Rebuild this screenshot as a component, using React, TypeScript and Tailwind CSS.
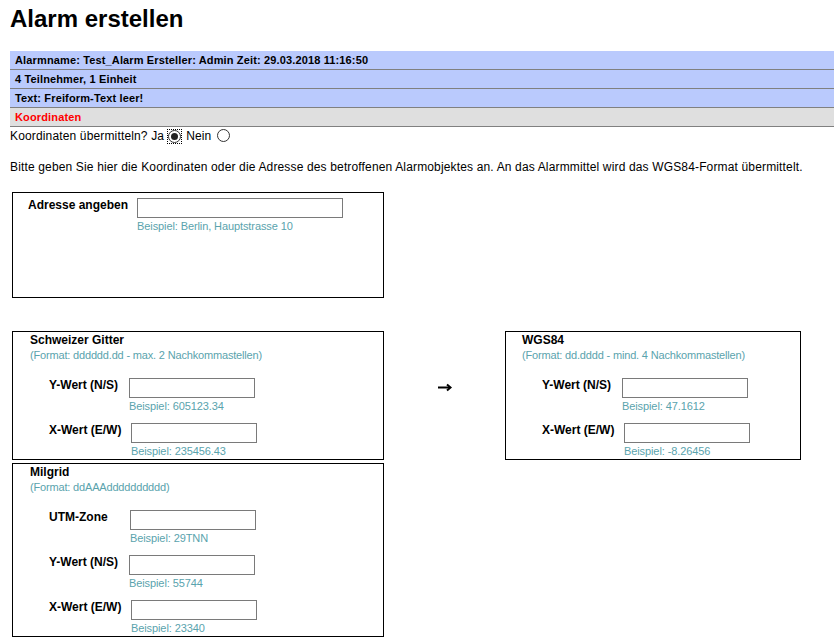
import React from "react";

const hint = "text-[11px] leading-[13px] tracking-[-0.1px] text-[#5aa3ad]";

interface FieldProps {
  label: string;
  example: string;
  labelWidth: string;
  first?: boolean;
}

function Field({ label, example, labelWidth, first }: FieldProps) {
  return (
    <div className={`flex items-start ${first ? "mt-[13px]" : "mt-[8px]"}`}>
      <div className={`${labelWidth} pt-[1px] text-[12px] leading-[16px] font-bold`}>{label}</div>
      <div className="flex flex-col">
        <div className="mt-[2px] w-[126px] h-[20px] border border-[#7a7a7a] bg-white" />
        <div className={`${hint} mt-[2px]`}>{example}</div>
      </div>
    </div>
  );
}

interface CoordBoxProps {
  title: string;
  format: string;
  children: React.ReactNode;
  className?: string;
}

function CoordBox({ title, format, children, className }: CoordBoxProps) {
  return (
    <div className={`border border-black pl-[17px] pb-[1px] ${className ?? ""}`}>
      <div className="text-[12px] leading-[16px] font-bold">{title}</div>
      <div className="text-[11px] leading-[15px] tracking-[-0.17px] text-[#5aa3ad]">{format}</div>
      <div className="pl-[19px]">{children}</div>
    </div>
  );
}

function Radio({ checked }: { checked?: boolean }) {
  return (
    <span
      className={`inline-flex items-center justify-center w-[15px] h-[15px] ${
        checked ? "outline outline-1 outline-dotted outline-black -outline-offset-1" : ""
      }`}
    >
      <span className="w-[13px] h-[13px] rounded-full border border-[#333] bg-white flex items-center justify-center">
        {checked && <span className="w-[7px] h-[7px] rounded-full bg-[#222]" />}
      </span>
    </span>
  );
}

export default function App() {
  const bars = [
    { text: "Alarmname: Test_Alarm Ersteller: Admin Zeit: 29.03.2018 11:16:50", bg: "bg-[#bacafd]", color: "text-black" },
    { text: "4 Teilnehmer, 1 Einheit", bg: "bg-[#bacafd]", color: "text-black" },
    { text: "Text: Freiform-Text leer!", bg: "bg-[#bacafd]", color: "text-black" },
    { text: "Koordinaten", bg: "bg-[#dfdfdf]", color: "text-[#ff0000]" },
  ];

  return (
    <div className="w-[834px] h-[640px] overflow-hidden bg-white text-black font-['Liberation_Sans',Arial,sans-serif]">
      <h1 className="pl-[10px] pt-[5px] text-[24px] leading-[28px] font-bold">Alarm erstellen</h1>

      <div className="ml-[10px] mt-[18px]">
        {bars.map((b) => (
          <div
            key={b.text}
            className={`h-[19px] box-border border-b border-[#808080] pl-[5px] pt-[3px] text-[11px] leading-[13px] tracking-[0.14px] font-bold ${b.bg} ${b.color}`}
          >
            {b.text}
          </div>
        ))}
      </div>

      <div className="ml-[10px] mt-[2px] flex items-center h-[15px] text-[12px] leading-[15px] tracking-[0.15px]">
        <span>Koordinaten übermitteln? Ja</span>
        <span className="ml-[3px]"><Radio checked /></span>
        <span className="ml-[4px]">Nein</span>
        <span className="ml-[5px]"><Radio /></span>
      </div>

      <p className="ml-[10px] mt-[16px] text-[12px] leading-[15px] tracking-[0.15px]">
        Bitte geben Sie hier die Koordinaten oder die Adresse des betroffenen Alarmobjektes an. An das Alarmmittel wird das WGS84-Format übermittelt.
      </p>

      <div className="ml-[12px] mt-[17px] w-[372px] h-[106px] border border-black pl-[15px] pt-[4px] flex items-start">
        <div className="text-[12px] leading-[16px] font-bold">Adresse angeben</div>
        <div className="ml-[9px] flex flex-col">
          <div className="mt-[1px] w-[206px] h-[20px] border border-[#7a7a7a]" />
          <div className={`${hint} mt-[2px]`}>Beispiel: Berlin, Hauptstrasse 10</div>
        </div>
      </div>

      <div className="mt-[33px] flex items-start">
        <div className="ml-[12px] w-[372px] flex flex-col">
          <CoordBox title="Schweizer Gitter" format="(Format: dddddd.dd - max. 2 Nachkommastellen)">
            <Field first label="Y-Wert (N/S)" example="Beispiel: 605123.34" labelWidth="w-[80px]" />
            <Field label="X-Wert (E/W)" example="Beispiel: 235456.43" labelWidth="w-[82px]" />
          </CoordBox>
          <CoordBox className="mt-[3px]" title="Milgrid" format="(Format: ddAAAdddddddddd)">
            <Field first label="UTM-Zone" example="Beispiel: 29TNN" labelWidth="w-[81px]" />
            <Field label="Y-Wert (N/S)" example="Beispiel: 55744" labelWidth="w-[80px]" />
            <Field label="X-Wert (E/W)" example="Beispiel: 23340" labelWidth="w-[82px]" />
          </CoordBox>
        </div>

        <div className="w-[121px] pl-[54px] pt-[52px]">
          <svg width="15" height="9" viewBox="0 0 15 9" fill="none" stroke="black">
            <path d="M0 4.5H12" strokeWidth="2" />
            <path d="M9 1.5L12.5 4.5L9 7.5" strokeWidth="2" />
          </svg>
        </div>

        <div className="w-[296px]">
          <CoordBox title="WGS84" format="(Format: dd.dddd - mind. 4 Nachkommastellen)" className="!pl-[16px]">
            <div className="pl-[1px]">
              <Field first label="Y-Wert (N/S)" example="Beispiel: 47.1612" labelWidth="w-[80px]" />
              <Field label="X-Wert (E/W)" example="Beispiel: -8.26456" labelWidth="w-[82px]" />
            </div>
          </CoordBox>
        </div>
      </div>
    </div>
  );
}
